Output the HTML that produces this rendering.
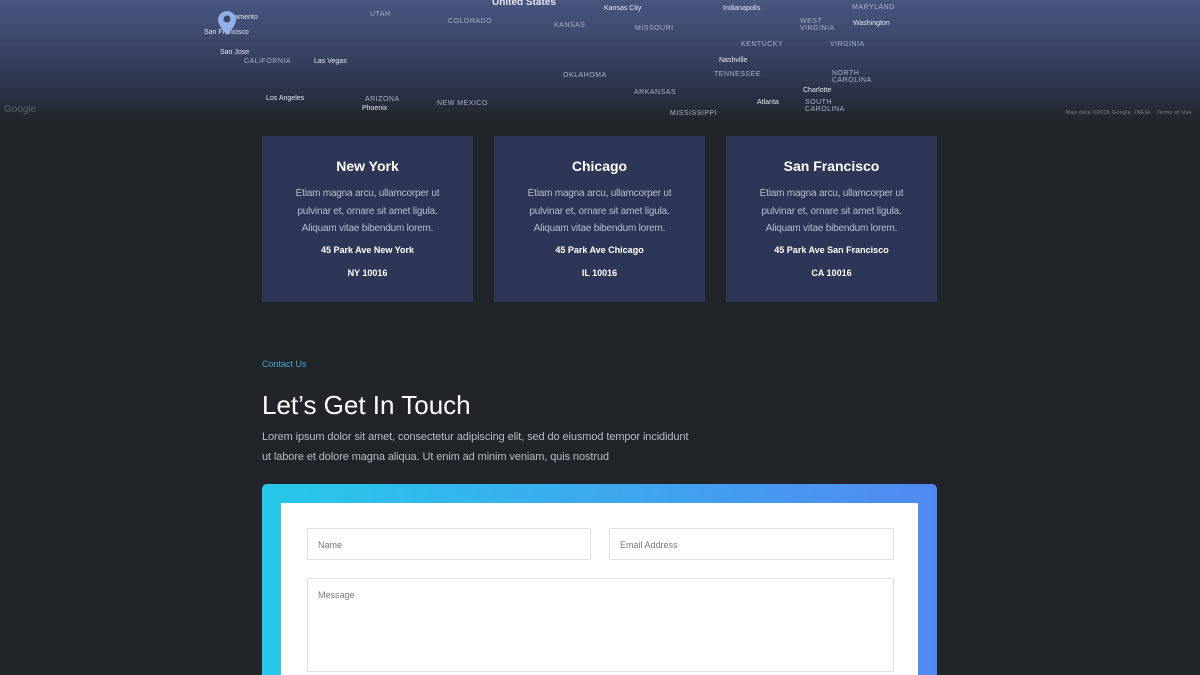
<!DOCTYPE html>
<html><head><meta charset="utf-8"><style>
*{margin:0;padding:0;box-sizing:border-box}
html,body{width:1200px;height:675px;overflow:hidden}
body{background:#212429;font-family:"Liberation Sans",sans-serif;position:relative}
.map{position:absolute;left:0;top:0;width:1200px;height:122px;background:linear-gradient(180deg,#485680 0%,#3a4566 40%,#2a3044 80%,#22252c 100%)}
.map span{position:absolute;font-size:7px;color:#aab2c8;letter-spacing:.5px;white-space:nowrap}
.map .c{color:#e4e8f0;letter-spacing:0}
.card{position:absolute;top:136px;width:211px;height:166px;background:#2e3658;text-align:center;color:#fff}
.card h3{font-size:14px;font-weight:bold;margin-top:22px}
.card p{font-size:10px;color:#b8bdd0;line-height:17.5px;margin-top:11px;letter-spacing:-.2px}
.card .a{font-size:9px;font-weight:bold;margin-top:7px}
.card .z{font-size:9px;font-weight:bold;margin-top:13px}
.lbl{position:absolute;left:262px;top:359px;font-size:9px;color:#4aa3d8}
h1{position:absolute;left:262px;top:390px;font-size:26px;font-weight:normal;color:#fff}
.txt{position:absolute;left:262px;top:427px;font-size:11px;color:#b8bcc6;line-height:20px;width:480px;letter-spacing:-.1px;white-space:nowrap}
.form{position:absolute;left:262px;top:484px;width:675px;height:191px;border-radius:5px 5px 0 0;background:linear-gradient(90deg,#27c9ea,#5189f2);overflow:hidden}
.inner{position:absolute;left:19px;top:19px;width:637px;height:172px;background:#fff}
.in{position:absolute;border:1px solid #e2e2e2;border-radius:2px;font-size:9px;color:#777;padding:11px 10px}
</style></head><body>
<div class="map">
<span class="c" style="left:220px;top:14px">Sacramento</span>
<span class="c" style="left:204px;top:29px">San Francisco</span>
<span class="c" style="left:220px;top:49px">San Jose</span>
<span style="left:244px;top:58px">CALIFORNIA</span>
<span class="c" style="left:314px;top:58px">Las Vegas</span>
<span class="c" style="left:266px;top:95px">Los Angeles</span>
<span style="left:365px;top:96px">ARIZONA</span>
<span class="c" style="left:362px;top:105px">Phoenix</span>
<span style="left:437px;top:100px">NEW MEXICO</span>
<span style="left:370px;top:11px">UTAH</span>
<span style="left:448px;top:18px">COLORADO</span>
<span style="left:554px;top:22px">KANSAS</span>
<span style="left:635px;top:25px">MISSOURI</span>
<span style="left:563px;top:72px">OKLAHOMA</span>
<span style="left:634px;top:89px">ARKANSAS</span>
<span style="left:670px;top:110px">MISSISSIPPI</span>
<span style="left:741px;top:41px">KENTUCKY</span>
<span class="c" style="left:719px;top:57px">Nashville</span>
<span style="left:714px;top:71px">TENNESSEE</span>
<span class="c" style="left:604px;top:5px">Kansas City</span>
<span class="c" style="left:723px;top:5px">Indianapolis</span>
<span style="left:800px;top:18px">WEST<br>VIRGINIA</span>
<span style="left:830px;top:41px">VIRGINIA</span>
<span style="left:832px;top:70px">NORTH<br>CAROLINA</span>
<span class="c" style="left:803px;top:87px">Charlotte</span>
<span class="c" style="left:757px;top:99px">Atlanta</span>
<span style="left:805px;top:99px">SOUTH<br>CAROLINA</span>
<span style="left:852px;top:4px">MARYLAND</span>
<span class="c" style="left:853px;top:20px">Washington</span>
<span class="c" style="left:492px;top:-3px;font-size:10px;font-weight:bold">United States</span>
<span style="left:4px;top:104px;font-size:10px;color:#5a606c;letter-spacing:0">Google</span>
<span style="left:1066px;top:110px;font-size:5px;color:#888">Map data ©2018 Google, INEGI &nbsp; Terms of Use</span>
<svg style="position:absolute;left:218px;top:11px" width="18" height="24" viewBox="0 0 18 24"><path d="M9 0C4 0 0 4 0 9c0 6 9 15 9 15s9-9 9-15C18 4 14 0 9 0z" fill="#8fb0e8"/><circle cx="9" cy="8" r="3.5" fill="#3a4566"/></svg>
</div>
<div class="card" style="left:262px"><h3>New York</h3><p>Etiam magna arcu, ullamcorper ut<br>pulvinar et, ornare sit amet ligula.<br>Aliquam vitae bibendum lorem.</p><div class="a">45 Park Ave New York</div><div class="z">NY 10016</div></div>
<div class="card" style="left:494px"><h3>Chicago</h3><p>Etiam magna arcu, ullamcorper ut<br>pulvinar et, ornare sit amet ligula.<br>Aliquam vitae bibendum lorem.</p><div class="a">45 Park Ave Chicago</div><div class="z">IL 10016</div></div>
<div class="card" style="left:726px"><h3>San Francisco</h3><p>Etiam magna arcu, ullamcorper ut<br>pulvinar et, ornare sit amet ligula.<br>Aliquam vitae bibendum lorem.</p><div class="a">45 Park Ave San Francisco</div><div class="z">CA 10016</div></div>
<div class="lbl">Contact Us</div>
<h1>Let’s Get In Touch</h1>
<div class="txt">Lorem ipsum dolor sit amet, consectetur adipiscing elit, sed do eiusmod tempor incididunt<br>ut labore et dolore magna aliqua. Ut enim ad minim veniam, quis nostrud</div>
<div class="form"><div class="inner">
<div class="in" style="left:26px;top:25px;width:284px;height:32px">Name</div>
<div class="in" style="left:328px;top:25px;width:285px;height:32px">Email Address</div>
<div class="in" style="left:26px;top:75px;width:587px;height:94px">Message</div>
</div></div>
</body></html>
